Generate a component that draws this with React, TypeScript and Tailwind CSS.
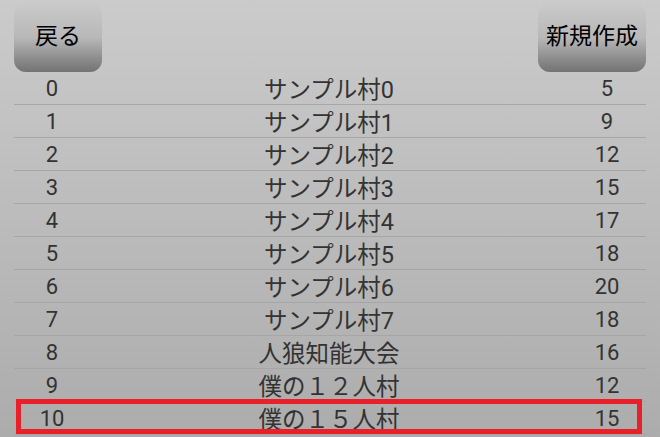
import React from 'react'

const villages = [
  { id: 0, name: 'サンプル村0', count: 5 },
  { id: 1, name: 'サンプル村1', count: 9 },
  { id: 2, name: 'サンプル村2', count: 12 },
  { id: 3, name: 'サンプル村3', count: 15 },
  { id: 4, name: 'サンプル村4', count: 17 },
  { id: 5, name: 'サンプル村5', count: 18 },
  { id: 6, name: 'サンプル村6', count: 20 },
  { id: 7, name: 'サンプル村7', count: 18 },
  { id: 8, name: '人狼知能大会', count: 16 },
  { id: 9, name: '僕の１２人村', count: 12 },
  { id: 10, name: '僕の１５人村', count: 15 },
]

const selectedId = 10

function HeaderButton({ label, width }: { label: string; width: string }) {
  return (
    <button
      className={`flex h-[69px] items-center justify-center rounded-[12px] bg-gradient-to-b from-[#cacaca] via-[#b8b8b8] to-[#737373] text-[23px] text-black ${width}`}
    >
      {label}
    </button>
  )
}

export default function App() {
  return (
    <div
      className="h-[437px] w-[660px] overflow-hidden bg-gradient-to-b from-[#cbcbcb] to-[#acacac] px-[14px] pt-[3px]"
      style={{ fontFamily: 'Roboto, "Noto Sans CJK JP", sans-serif' }}
    >
      <div className="flex items-start justify-between">
        <HeaderButton label="戻る" width="w-[88px]" />
        <HeaderButton label="新規作成" width="w-[108px]" />
      </div>

      <div className="flex flex-col">
        {villages.map((v) => (
          <div
            key={v.id}
            className="relative flex h-[33px] items-center border-b border-[#a6a6a6] text-[22px] text-[#333]"
          >
            <div className="w-[76px] text-center">{v.id}</div>
            <div className="flex-1 pt-[3px] text-center text-[23.5px] leading-[30px]">{v.name}</div>
            <div className="w-[78px] text-center">{v.count}</div>
            {v.id === selectedId && (
              <div className="absolute -top-[3px] bottom-0 left-[2px] right-[4px] border-[5px] border-[#e8202a]" />
            )}
          </div>
        ))}
      </div>
    </div>
  )
}
